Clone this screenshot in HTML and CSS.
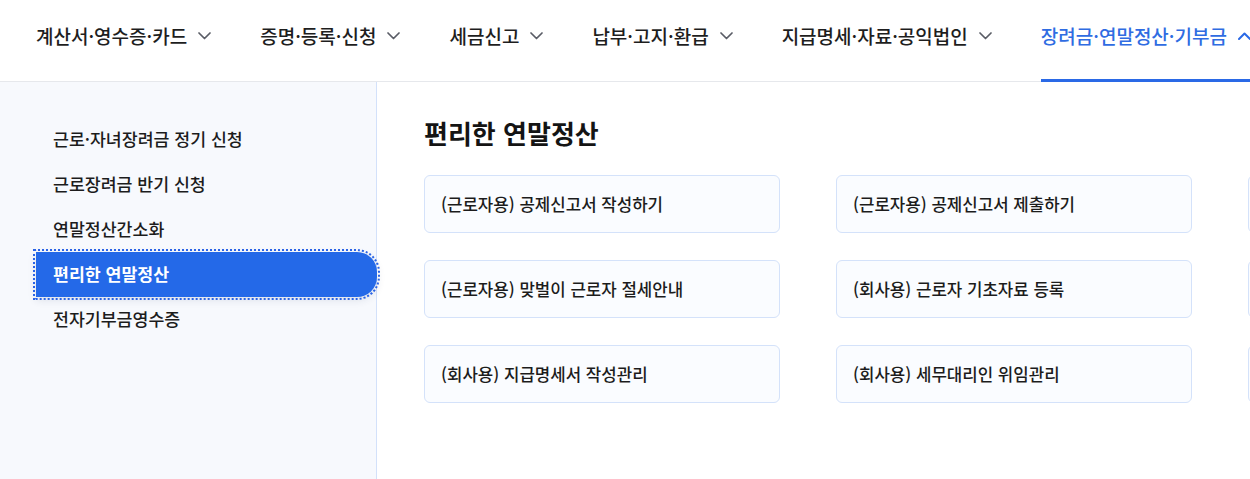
FILE: index.html
```
<!DOCTYPE html>
<html lang="ko">
<head>
<meta charset="utf-8">
<title>장려금·연말정산·기부금</title>
<link rel="stylesheet" href="styles.css">
</head>
<body>
<nav class="gnb">
  <a class="gnb-item">계산서·영수증·카드<svg class="chev" viewBox="0 0 13 8"><polyline points="1,1 6.5,6.5 12,1"/></svg></a>
  <a class="gnb-item">증명·등록·신청<svg class="chev" viewBox="0 0 13 8"><polyline points="1,1 6.5,6.5 12,1"/></svg></a>
  <a class="gnb-item">세금신고<svg class="chev" viewBox="0 0 13 8"><polyline points="1,1 6.5,6.5 12,1"/></svg></a>
  <a class="gnb-item">납부·고지·환급<svg class="chev" viewBox="0 0 13 8"><polyline points="1,1 6.5,6.5 12,1"/></svg></a>
  <a class="gnb-item">지급명세·자료·공익법인<svg class="chev" viewBox="0 0 13 8"><polyline points="1,1 6.5,6.5 12,1"/></svg></a>
  <a class="gnb-item is-active">장려금·연말정산·기부금<svg class="chev" viewBox="0 0 13 8"><polyline points="1,7 6.5,1.5 12,7"/></svg></a>
</nav>
<div class="panel">
  <aside class="side">
    <ul class="side-list">
      <li class="side-item">근로·자녀장려금 정기 신청</li>
      <li class="side-item">근로장려금 반기 신청</li>
      <li class="side-item">연말정산간소화</li>
      <li class="side-item is-active">편리한 연말정산</li>
      <li class="side-item">전자기부금영수증</li>
    </ul>
  </aside>
  <main class="content">
    <h2 class="title">편리한 연말정산</h2>
    <div class="cards">
      <a class="card">(근로자용) 공제신고서 작성하기</a>
      <a class="card">(근로자용) 공제신고서 제출하기</a>
      <a class="card" aria-hidden="true"></a>
      <a class="card">(근로자용) 맞벌이 근로자 절세안내</a>
      <a class="card">(회사용) 근로자 기초자료 등록</a>
      <a class="card" aria-hidden="true"></a>
      <a class="card">(회사용) 지급명세서 작성관리</a>
      <a class="card">(회사용) 세무대리인 위임관리</a>
      <a class="card" aria-hidden="true"></a>
    </div>
  </main>
</div>
</body>
</html>
```
FILE: styles.css
```
* { box-sizing: border-box; }
html, body {
  margin: 0;
  padding: 0;
  width: 1250px;
  height: 479px;
  overflow: hidden;
  background: #ffffff;
  font-family: "Noto Sans CJK KR", "Noto Sans", sans-serif;
  color: #1c1c1c;
}
.gnb {
  display: flex;
  height: 82px;
  padding-left: 36px;
  gap: 49px;
  border-bottom: 1px solid #e6e8ec;
}
.gnb-item {
  display: flex;
  align-items: flex-start;
  gap: 11px;
  height: 82px;
  margin-bottom: -1px;
  padding-top: 22px;
  border-bottom: 3px solid transparent;
  font-size: 19px;
  line-height: 28px;
  font-weight: 500;
  color: #1e1e1e;
  white-space: nowrap;
  text-decoration: none;
}
.chev {
  width: 13px;
  height: 8px;
  margin-top: 10px;
  fill: none;
  stroke: #5a5d66;
  stroke-width: 1.7;
  stroke-linecap: round;
  stroke-linejoin: round;
}
.gnb-item.is-active {
  color: #2f6ce2;
  border-bottom-color: #2a69e6;
}
.gnb-item.is-active .chev {
  stroke: #2a69e6;
  stroke-width: 2;
}
.panel {
  display: flex;
  height: 397px;
}
.side {
  flex: 0 0 377px;
  background: #f7f9fd;
  border-right: 1px solid #d3e1fa;
  padding: 35px 0 0 36px;
}
.side-list {
  list-style: none;
  margin: 0 -1px 0 0;
  padding: 0;
}
.side-item {
  height: 45px;
  display: flex;
  align-items: center;
  padding-left: 17px;
  padding-bottom: 2px;
  font-size: 17.3px;
  font-weight: 500;
  color: #1c1c1c;
  white-space: nowrap;
}
.side-item.is-active {
  background: #2469e8;
  color: #ffffff;
  font-weight: 700;
  border-radius: 0 20px 20px 0;
  outline: 2px dotted #2a63e6;
  outline-offset: 1px;
  box-shadow: 0 3px 8px rgba(30, 50, 90, 0.12);
}
.content {
  flex: 1;
  min-width: 0;
  overflow: hidden;
  padding: 33px 0 0 47px;
}
.title {
  margin: 0 0 24px;
  font-size: 26px;
  line-height: 36px;
  font-weight: 700;
  color: #141414;
}
.cards {
  display: grid;
  grid-template-columns: repeat(3, 356px);
  column-gap: 56px;
  row-gap: 27px;
}
.card {
  height: 58px;
  display: flex;
  align-items: center;
  padding-left: 16px;
  padding-bottom: 1px;
  background: #fafcff;
  border: 1px solid #d4e2fa;
  border-radius: 6px;
  font-size: 16.8px;
  font-weight: 500;
  color: #1c1c1c;
  white-space: nowrap;
  text-decoration: none;
}
```
